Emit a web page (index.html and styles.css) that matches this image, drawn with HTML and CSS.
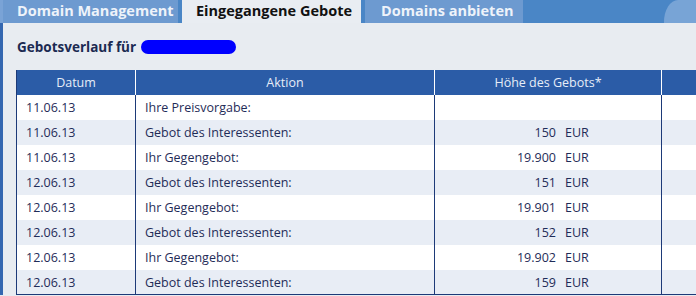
FILE: index.html
```html
<!DOCTYPE html>
<html lang="de">
<head>
    <meta charset="UTF-8">
    <title>Eingegangene Gebote</title>
    <link rel="stylesheet" href="styles.css">
</head>
<body>

    <!-- Tabs -->
    <div class="tabbar">
        <div class="tab tab-domains">Domain Management</div>
        <div class="tab tab-bids active">Eingegangene Gebote</div>
        <div class="tab tab-offer">Domains anbieten</div>
        <div class="tabbar-fill"></div>
        <div class="tabbar-corner"></div>
    </div>

    <div class="content">
        <h2 class="title">Gebotsverlauf für <span class="redacted"></span></h2>

        <table class="bids">
            <colgroup>
                <col class="col-date">
                <col class="col-action">
                <col class="col-amount">
                <col class="col-extra">
            </colgroup>
            <thead>
                <tr>
                    <th>Datum</th>
                    <th>Aktion</th>
                    <th>Höhe des Gebots*</th>
                    <th></th>
                </tr>
            </thead>
            <tbody>
                <tr><td>11.06.13</td><td>Ihre Preisvorgabe:</td><td></td><td></td></tr>
                <tr><td>11.06.13</td><td>Gebot des Interessenten:</td><td class="amount"><span class="num">150</span>EUR</td><td></td></tr>
                <tr><td>11.06.13</td><td>Ihr Gegengebot:</td><td class="amount"><span class="num">19.900</span>EUR</td><td></td></tr>
                <tr><td>12.06.13</td><td>Gebot des Interessenten:</td><td class="amount"><span class="num">151</span>EUR</td><td></td></tr>
                <tr><td>12.06.13</td><td>Ihr Gegengebot:</td><td class="amount"><span class="num">19.901</span>EUR</td><td></td></tr>
                <tr><td>12.06.13</td><td>Gebot des Interessenten:</td><td class="amount"><span class="num">152</span>EUR</td><td></td></tr>
                <tr><td>12.06.13</td><td>Ihr Gegengebot:</td><td class="amount"><span class="num">19.902</span>EUR</td><td></td></tr>
                <tr><td>12.06.13</td><td>Gebot des Interessenten:</td><td class="amount"><span class="num">159</span>EUR</td><td></td></tr>
            </tbody>
        </table>
    </div>

</body>
</html>
```

FILE: styles.css
```css
/* Page */
body {
    margin: 0;
    font-family: "Open Sans", "DejaVu Sans", sans-serif;
    background: #e8ecf1;
    overflow: hidden;
}

/* Tab bar */
.tabbar {
    display: flex;
    height: 23px;
    background: #4a86c6;
    border-left: 3px solid #7aa3d6;
}

.tab {
    height: 23px;
    line-height: 22px;
    padding-left: 14px;
    margin-right: 4px;
    background: #6d9ad0;
    color: #eef3fa;
    font-size: 14.5px;
    font-weight: bold;
    white-space: nowrap;
    box-sizing: border-box;
}

.tab-domains { width: 175px; }
.tab-bids { width: 179px; }
.tab-offer { width: 158px; padding-left: 16px; }

.tab.active {
    background: #e9edf2;
    color: #111;
}

.tabbar-fill {
    flex: 1;
}

.tabbar-corner {
    width: 32px;
    background: #78a4d6;
    border-top-left-radius: 14px 22px;
}

/* Content */
.content {
    border-left: 3px solid #3467b0;
    padding: 13px 0 0 13px;
}

.title {
    margin: 0 0 13px 1px;
    height: 21px;
    font-size: 13.5px;
    font-weight: bold;
    color: #1b2a52;
    display: flex;
    align-items: center;
}

.redacted {
    display: inline-block;
    width: 95px;
    height: 14px;
    margin-left: 5px;
    background: #0000ff;
    border-radius: 7px;
}

/* Bid table */
.bids {
    border-collapse: collapse;
    table-layout: fixed;
    width: 680px;
    font-size: 12.5px;
    color: #1f2c58;
}

.col-date { width: 119px; }
.col-action { width: 299px; }
.col-amount { width: 227px; }

.bids th {
    height: 25px;
    padding: 0;
    background: #2b5ca7;
    color: #e6edf8;
    font-weight: normal;
    border-left: 1px solid #fff;
}

.bids th:first-child {
    border-left: 1px solid #1d3a78;
}

.bids td {
    height: 25px;
    padding: 0 0 0 9px;
    border-left: 1px solid #1d3a78;
    background: #fff;
}

.bids tbody tr:nth-child(even) td {
    background: #e8edf5;
}

.bids tbody tr:last-child td {
    height: 24px;
    border-bottom: 1px solid #1d3a78;
}

.amount .num {
    display: inline-block;
    width: 112px;
    margin-right: 9px;
    text-align: right;
}
```
